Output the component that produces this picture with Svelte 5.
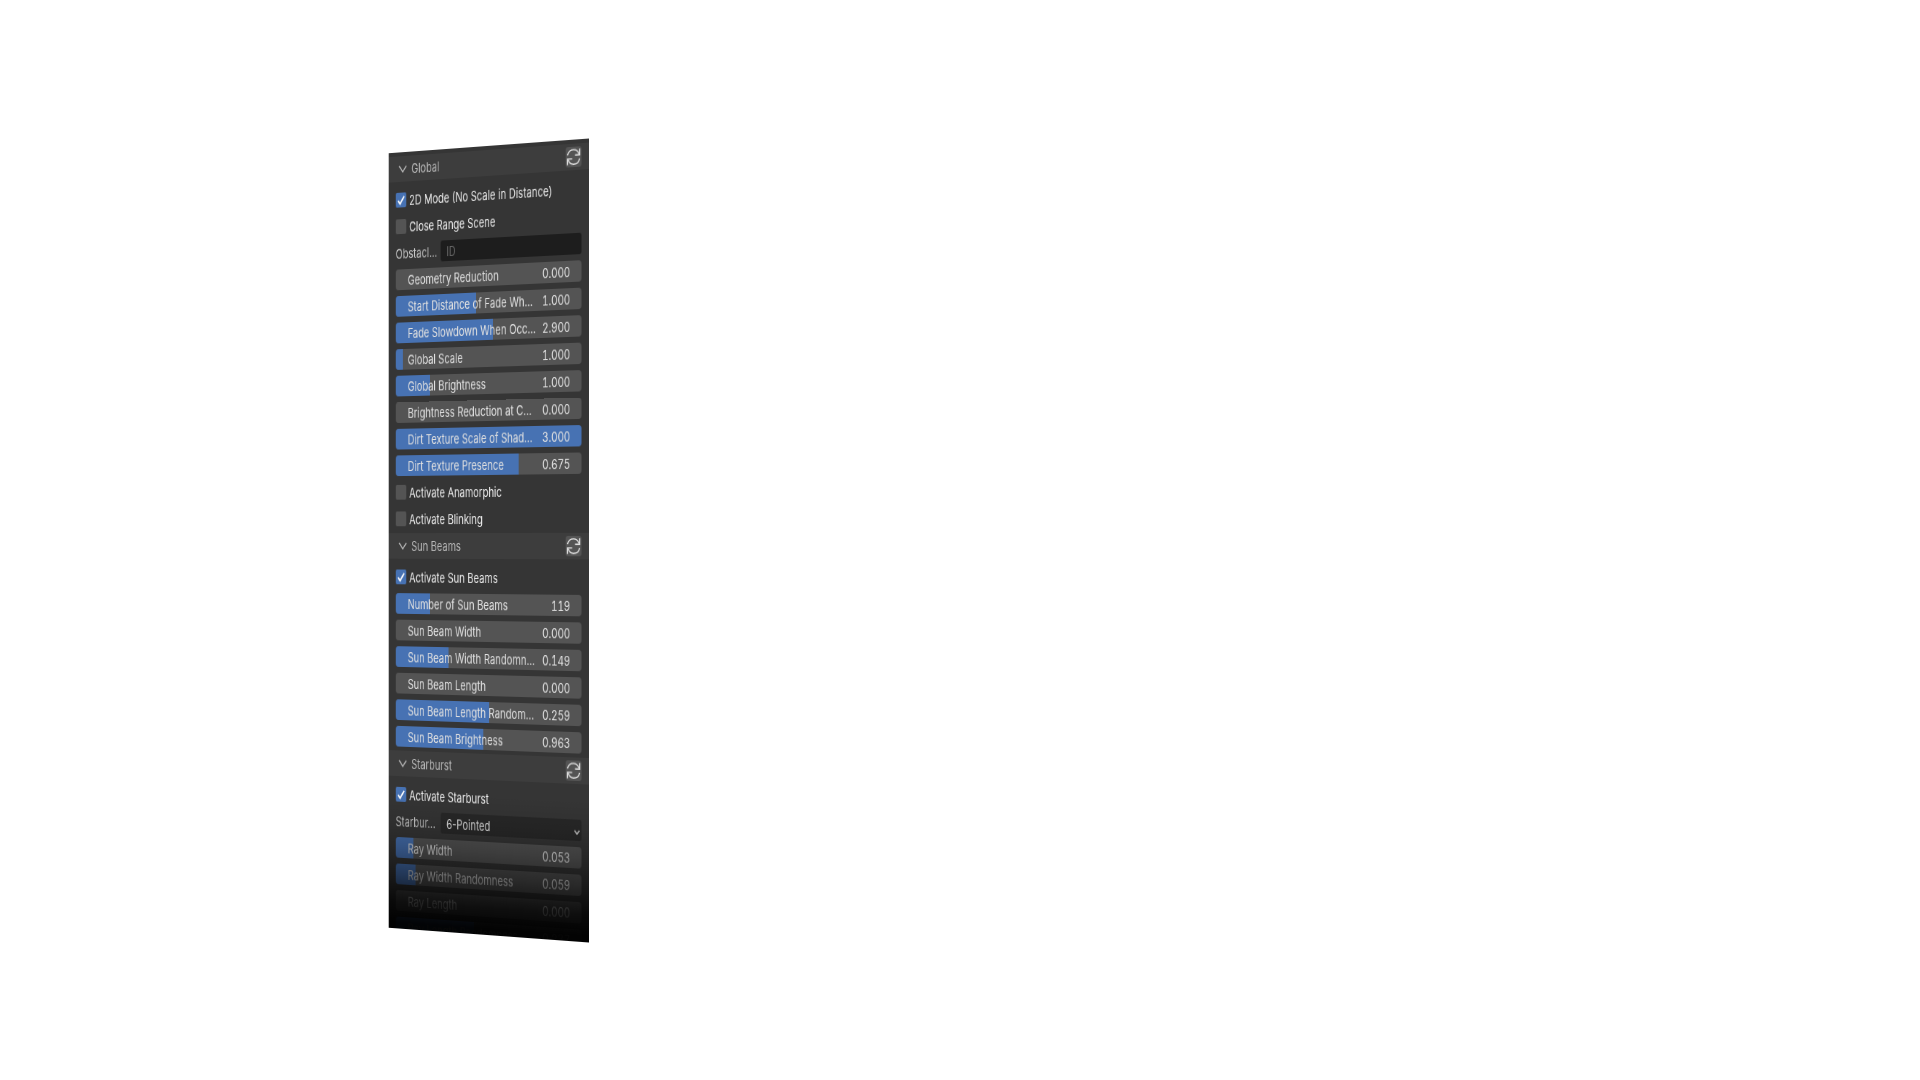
<script>
  const sections = [
    {
      title: 'Global',
      items: [
        { kind: 'check', label: '2D Mode (No Scale in Distance)', on: true },
        { kind: 'check', label: 'Close Range Scene', on: false },
        { kind: 'text', label: 'Obstacl...', hint: 'ID' },
        { kind: 'slider', label: 'Geometry Reduction', value: '0.000', fill: 0 },
        { kind: 'slider', label: 'Start Distance of Fade Wh...', value: '1.000', fill: 44 },
        { kind: 'slider', label: 'Fade Slowdown When Occ...', value: '2.900', fill: 53 },
        { kind: 'slider', label: 'Global Scale', value: '1.000', fill: 4 },
        { kind: 'slider', label: 'Global Brightness', value: '1.000', fill: 19 },
        { kind: 'slider', label: 'Brightness Reduction at C...', value: '0.000', fill: 0 },
        { kind: 'slider', label: 'Dirt Texture Scale of Shad...', value: '3.000', fill: 100 },
        { kind: 'slider', label: 'Dirt Texture Presence', value: '0.675', fill: 67 },
        { kind: 'check', label: 'Activate Anamorphic', on: false },
        { kind: 'check', label: 'Activate Blinking', on: false },
      ],
    },
    {
      title: 'Sun Beams',
      items: [
        { kind: 'check', label: 'Activate Sun Beams', on: true },
        { kind: 'slider', label: 'Number of Sun Beams', value: '119', fill: 19 },
        { kind: 'slider', label: 'Sun Beam Width', value: '0.000', fill: 0 },
        { kind: 'slider', label: 'Sun Beam Width Randomn...', value: '0.149', fill: 29 },
        { kind: 'slider', label: 'Sun Beam Length', value: '0.000', fill: 0 },
        { kind: 'slider', label: 'Sun Beam Length Random...', value: '0.259', fill: 51 },
        { kind: 'slider', label: 'Sun Beam Brightness', value: '0.963', fill: 48 },
      ],
    },
    {
      title: 'Starburst',
      items: [
        { kind: 'check', label: 'Activate Starburst', on: true },
        { kind: 'select', label: 'Starbur...', value: '6-Pointed' },
        { kind: 'slider', label: 'Ray Width', value: '0.053', fill: 10 },
        { kind: 'slider', label: 'Ray Width Randomness', value: '0.059', fill: 11 },
        { kind: 'slider', label: 'Ray Length', value: '0.000', fill: 0 },
        { kind: 'slider', label: 'Ray Length Randomness', value: '0.237', fill: 43 },
      ],
    },
  ];
</script>

<main>
  <div class="scene">
    <div class="panel">
      {#each sections as section, s}
        <section>
          <header>
            <button class="toggle" aria-expanded="true">
              <svg class="chevron" viewBox="0 0 12 12" aria-hidden="true"><path d="M1 3 6 9l5-6" /></svg>
              {section.title}
            </button>
            <button class="reset" aria-label="Reset {section.title}">
              <svg viewBox="0 0 20 20" preserveAspectRatio="none" aria-hidden="true">
                <path d="M1.500 8C2.500 4 6 2 10 2c3.500 0 6 1.500 7.500 5M18.500 1.500v6.500h-6.500M18.500 12c-1 4-4.500 6-8.500 6-3.500 0-6-1.500-7.500-5M1.500 18.500v-6.500h6.500" />
              </svg>
            </button>
          </header>
          <div class="items">
            {#each section.items as item, i}
              {@const id = `f${s}-${i}`}
              {#if item.kind === 'check'}
                <label class="check">
                  <input type="checkbox" checked={item.on} />
                  <svg viewBox="0 0 14 14" aria-hidden="true"><path d="M3 7.500 5.800 10.500 11.200 3.500" /></svg>
                  {item.label}
                </label>
              {:else if item.kind === 'slider'}
                <div class="slider">
                  <input {id} type="range" min="0" max="100" value={item.fill} style:--fill="{item.fill}%" />
                  <label for={id}>{item.label}</label>
                  <output for={id}>{item.value}</output>
                </div>
              {:else}
                <div class="field">
                  <label for={id}>{item.label}</label>
                  {#if item.kind === 'text'}
                    <input {id} type="text" placeholder={item.hint} />
                  {:else}
                    <div class="drop">
                      <select {id}><option>{item.value}</option></select>
                      <svg viewBox="0 0 12 12" aria-hidden="true"><path d="M2 4.500 6 8.500l4-4" /></svg>
                    </div>
                  {/if}
                </div>
              {/if}
            {/each}
          </div>
        </section>
      {/each}
    </div>
  </div>
</main>

<style>
  :global(body) {
    background: #fff;
  }
  main {
    box-sizing: border-box;
    min-height: 100vh;
    display: flex;
    align-items: center;
    padding-left: 18.25%;
  }
  .scene {
    perspective: 5000px;
  }
  .panel {
    position: relative;
    box-sizing: border-box;
    width: 274px;
    padding-top: 4px;
    overflow: hidden;
    outline: 1px solid transparent;
    background: #353535;
    color: #e0e0e0;
    font: 13px/20px Inter, 'Liberation Sans', sans-serif;
    transform: rotateY(-43deg);
  }
  /* The list runs on below the panel and fades out there. */
  .panel::after {
    content: '';
    position: absolute;
    inset: auto 0 0;
    z-index: 2;
    height: 140px;
    background: linear-gradient(
      transparent,
      rgb(0 0 0 / 0.1) 21%,
      rgb(0 0 0 / 0.28) 41%,
      rgb(0 0 0 / 0.52) 61%,
      rgb(0 0 0 / 0.82) 80%,
      rgb(0 0 0 / 0.97) 96%
    );
    pointer-events: none;
  }
  button,
  input,
  select {
    margin: 0;
    border: 0;
    padding: 0;
    font: inherit;
    color: inherit;
    appearance: none;
  }
  svg {
    fill: none;
    stroke: currentColor;
  }
  header {
    display: flex;
    align-items: center;
    justify-content: space-between;
    height: 26px;
    padding: 0 10px 0 14px;
    background: #3d3d3d;
    color: #b8b8b8;
  }
  .toggle {
    display: flex;
    align-items: center;
    gap: 6px;
    background: none;
  }
  .chevron {
    width: 12px;
    height: 12px;
    stroke-width: 1.400;
  }
  .reset {
    display: grid;
    place-items: center;
    width: 21px;
    height: 20px;
    border-radius: 3px;
    background: #545454;
    color: #e0e0e0;
  }
  .reset svg {
    width: 19px;
    height: 18px;
    stroke-width: 1.500;
  }
  .items {
    display: grid;
    gap: 6px;
    padding: 8px 10px 4px;
  }
  section:last-child .items {
    margin-bottom: -13px;
  }
  .check {
    display: grid;
    grid-template-columns: 15px 1fr;
    align-items: center;
    column-gap: 4px;
    height: 21px;
    color: #ececec;
  }
  .check input {
    grid-area: 1 / 1;
    width: 15px;
    height: 15px;
    border-radius: 2px;
    background: #545454;
  }
  .check input:checked {
    background: #4772b3;
  }
  .check svg {
    grid-area: 1 / 1;
    width: 15px;
    height: 15px;
    stroke: #fff;
    stroke-width: 1.800;
    visibility: hidden;
    pointer-events: none;
  }
  .check input:checked + svg {
    visibility: visible;
  }
  .slider {
    display: grid;
    grid-template-columns: 1fr auto;
    align-items: center;
    height: 21px;
  }
  .slider input {
    grid-area: 1 / 1 / 2 / 3;
    width: 100%;
    height: 21px;
    border-radius: 4px;
    background: linear-gradient(to right, #4772b3 var(--fill), #545454 var(--fill));
  }
  .slider input::-webkit-slider-thumb {
    appearance: none;
    width: 1px;
    height: 21px;
    background: transparent;
  }
  .slider label {
    grid-area: 1 / 1;
    padding-left: 17px;
    white-space: nowrap;
    pointer-events: none;
    z-index: 1;
  }
  .slider output {
    grid-area: 1 / 2;
    padding-right: 15px;
    font-feature-settings: 'tnum';
    pointer-events: none;
    z-index: 1;
  }
  .field {
    display: grid;
    grid-template-columns: 57px 1fr;
    gap: 6px;
    align-items: center;
    height: 21px;
    color: #c8c8c8;
    white-space: nowrap;
  }
  .field input,
  .field select {
    box-sizing: border-box;
    width: 100%;
    height: 21px;
    padding: 0 8px;
    border-radius: 3px;
    background: #1d1d1d;
  }
  .field input::placeholder {
    color: #666;
    opacity: 1;
  }
  .field select {
    grid-area: 1 / 1;
    background: #282828;
    color: #e0e0e0;
  }
  .drop {
    display: grid;
    align-items: center;
    height: 21px;
  }
  .drop svg {
    grid-area: 1 / 1;
    justify-self: end;
    width: 10px;
    height: 10px;
    margin: 2px 1px 0;
    stroke-width: 1.800;
    pointer-events: none;
  }
</style>
